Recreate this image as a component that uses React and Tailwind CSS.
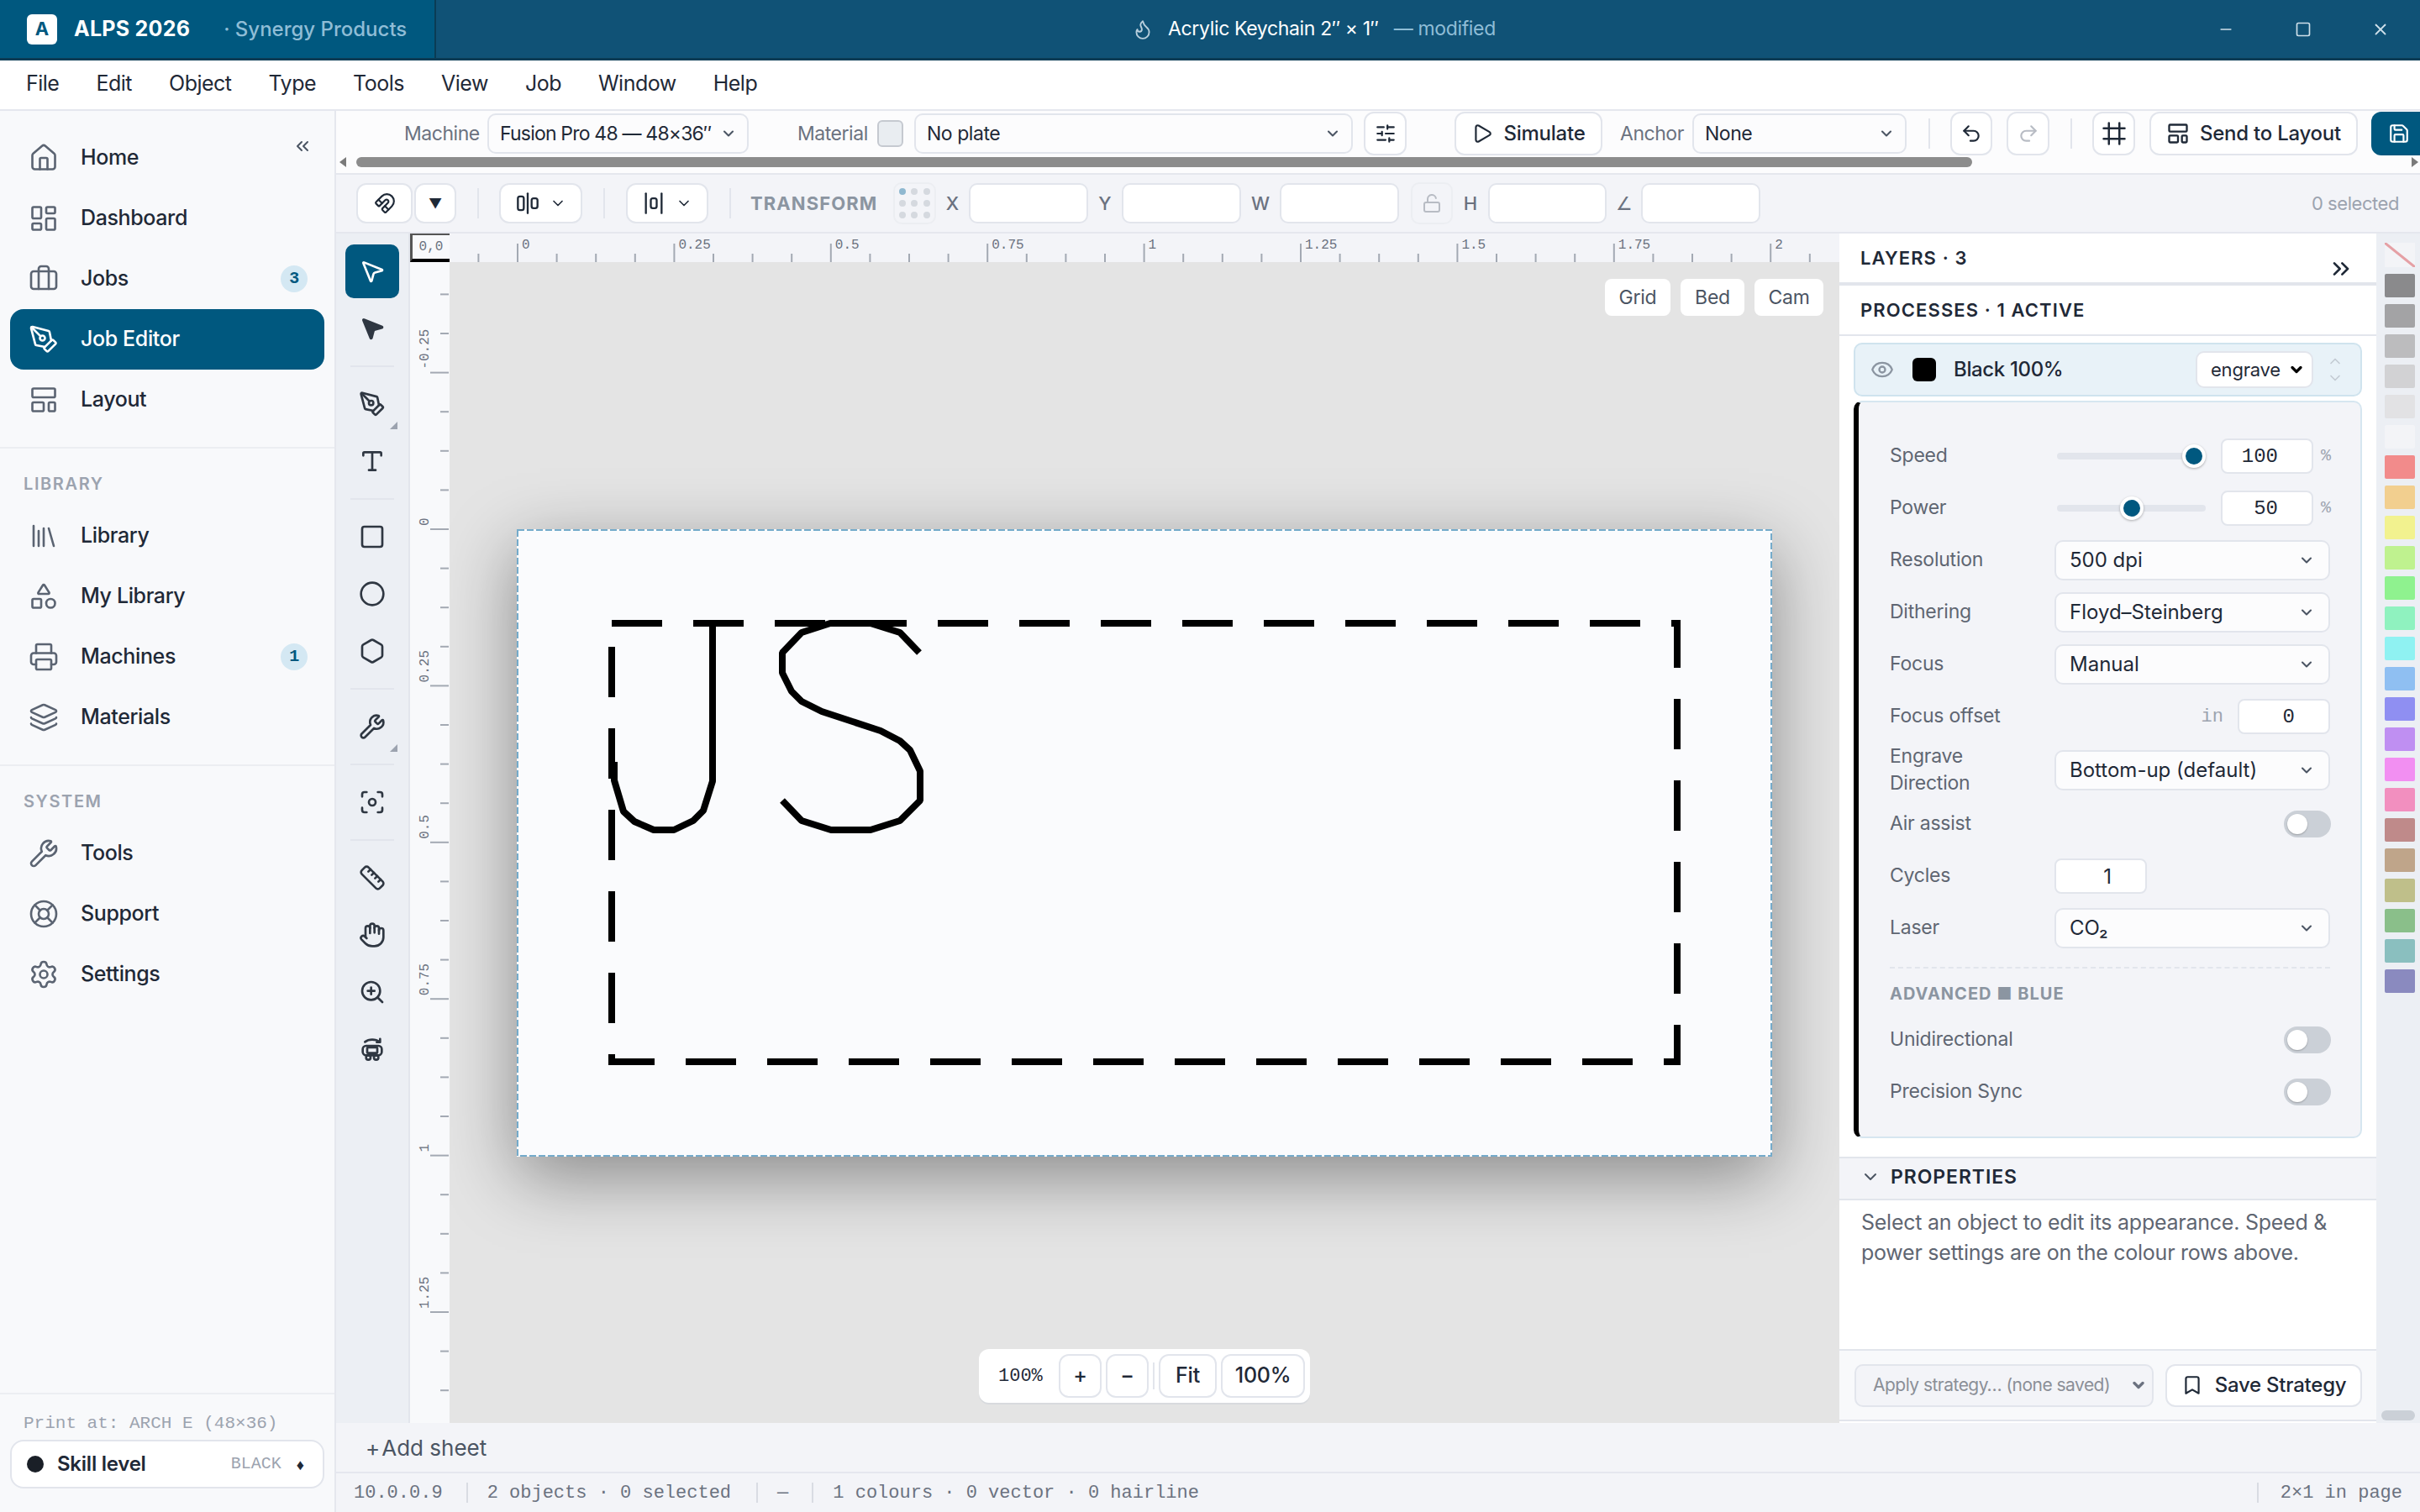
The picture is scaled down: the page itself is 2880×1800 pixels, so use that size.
import {
  AlignHorizontalJustifyCenter,
  AlignHorizontalSpaceAround,
  Bookmark,
  Briefcase,
  ChevronDown,
  ChevronUp,
  ChevronsLeft,
  ChevronsRight,
  Circle,
  Eye,
  Flame,
  Focus,
  Hand,
  Hexagon,
  House,
  Layers,
  LayoutDashboard,
  LayoutTemplate,
  Library,
  LifeBuoy,
  LockOpen,
  Magnet,
  Minus,
  MousePointer2,
  PenTool,
  Play,
  Printer,
  Redo2,
  Ruler,
  Save,
  Settings,
  Shapes,
  SlidersHorizontal,
  Square,
  Type,
  Undo2,
  Wrench,
  X,
  ZoomIn,
} from "lucide-react";

const MONO = "font-['Liberation_Mono',monospace]";

const palette = [
  "#8a8a8c", "#a3a3a5", "#bcbcbe", "#d2d2d4", "#e2e2e4", "#f3f4f7",
  "#f28b8b", "#f2cf8f", "#f2f28f", "#bff28f", "#8ff28f", "#8ff2bf",
  "#8ff2f2", "#8fbff2", "#8f8ff2", "#bf8ff2", "#f28ff2", "#f28fbf",
  "#bf8a8a", "#bfa58a", "#bfbf8a", "#8abf8a", "#8abfbf", "#8a8abf",
];

// Rotate-bus tool has no lucide icon of its own
function CustomTool({ size }) {
  return (
    <svg width={size} height={size} viewBox="0 0 24 24" fill="none" stroke="currentColor" strokeWidth="2" strokeLinecap="round" strokeLinejoin="round">
      <path d="M5.5 5.5C9 2.8 15 2.8 18.5 5.5" />
      <path d="M19 2.8v3h-3" />
      <rect x="3.5" y="9" width="17" height="8.5" rx="3" />
      <rect x="7.5" y="10.5" width="9" height="5" rx="0.5" />
      <circle cx="8.5" cy="19.5" r="2" />
      <circle cx="15.5" cy="19.5" r="2" />
    </svg>
  );
}

function ArtboardGrid() {
  return (
    <svg width="30" height="30" viewBox="0 0 24 24" fill="none" stroke="currentColor" strokeWidth="2" strokeLinecap="round">
      <path d="M7 2v20M17 2v20M2 7h20M2 17h20" />
    </svg>
  );
}

function NavItem({ icon: Icon, label, badge, active }) {
  return (
    <div className={`flex h-[72px] w-[374px] items-center rounded-2xl pl-[22px] text-[25px] font-medium tracking-[-0.015em] ${active ? "bg-[#00587f] text-white" : "text-[#1f2937]"}`}>
      <Icon size={36} strokeWidth={1.75} className={active ? "text-white" : "text-[#5b6472]"} />
      <span className="ml-[26px] pb-[1px]">{label}</span>
      {badge && (
        <span className={`ml-auto mr-5 flex h-8 w-8 items-center justify-center rounded-full bg-[#d4e8f3] text-[20px] font-semibold text-[#00587f] ${MONO}`}>
          {badge}
        </span>
      )}
    </div>
  );
}

function NavLabel({ children }) {
  return <div className="flex h-[68px] items-center pl-[28px] pt-[16px] text-[20px] font-semibold tracking-[0.08em] text-[#9ca3af]">{children}</div>;
}

function Sidebar() {
  return (
    <aside className="relative flex w-[400px] shrink-0 flex-col border-r-2 border-[#e5e7ee] bg-[#f8f9fb]">
      <button className="absolute left-[348px] top-[30px] text-[#4b5563]">
        <ChevronsLeft size={24} strokeWidth={2} />
      </button>
      <div className="border-b-2 border-[#eceef2] px-3 pb-5 pt-5">
        <NavItem icon={House} label="Home" />
        <NavItem icon={LayoutDashboard} label="Dashboard" />
        <NavItem icon={Briefcase} label="Jobs" badge="3" />
        <NavItem icon={PenTool} label="Job Editor" active />
        <NavItem icon={LayoutTemplate} label="Layout" />
      </div>
      <div className="border-b-2 border-[#eceef2] pb-5">
        <NavLabel>LIBRARY</NavLabel>
        <div className="px-3">
          <NavItem icon={Library} label="Library" />
          <NavItem icon={Shapes} label="My Library" />
          <NavItem icon={Printer} label="Machines" badge="1" />
          <NavItem icon={Layers} label="Materials" />
        </div>
      </div>
      <div>
        <NavLabel>SYSTEM</NavLabel>
        <div className="px-3">
          <NavItem icon={Wrench} label="Tools" />
          <NavItem icon={LifeBuoy} label="Support" />
          <NavItem icon={Settings} label="Settings" />
        </div>
      </div>
      <div className="mt-auto h-[142px] border-t-2 border-[#eceef2] px-3">
        <div className={`ml-4 mt-[22px] text-[21px] leading-[26px] text-[#9ca3af] ${MONO}`}>Print at: ARCH E (48×36)</div>
        <div className="mt-[6px] flex h-[58px] items-center rounded-2xl border-2 border-[#e2e5ec] bg-white pl-[18px] pr-[22px]">
          <span className="h-5 w-5 rounded-full bg-[#1a1f27]" />
          <span className="ml-4 text-[24px] font-semibold tracking-[-0.01em] text-[#1f2937]">Skill level</span>
          <span className={`ml-auto text-[20px] text-[#9ca3af] ${MONO}`}>BLACK</span>
          <span className="ml-[18px] text-[18px] text-[#1f2937]">♦</span>
        </div>
      </div>
    </aside>
  );
}

// size, padding and text come from the caller
function Select({ className, children, chevron = "text-[#4b5563]", weight = 2.5 }) {
  return (
    <div className={`flex shrink-0 items-center justify-between whitespace-nowrap rounded-[10px] border-2 border-[#e2e5ec] ${className}`}>
      <span>{children}</span>
      <ChevronDown size={20} strokeWidth={weight} className={chevron} />
    </div>
  );
}

const BAR_SELECT = "h-[48px] bg-[#fcfcfd] pl-[13px] pr-[12px] text-[23px] tracking-[-0.02em] text-[#1f2937]";

function Btn({ className, children }) {
  return <button className={`flex shrink-0 items-center justify-center whitespace-nowrap rounded-[12px] border-2 border-[#e2e5ec] bg-white ${className}`}>{children}</button>;
}

const BAR_BTN = "h-[52px] text-[#1f2937]";
const TF_BTN = "h-[48px] text-[#1f2937]";

function VSep({ className }) {
  return <div className={`h-9 w-[2px] shrink-0 bg-[#e2e5ec] ${className}`} />;
}

function BarLabel({ className, children }) {
  return <span className={`whitespace-nowrap text-[23px] tracking-[-0.02em] text-[#6b7280] ${className}`}>{children}</span>;
}

function MachineBar() {
  return (
    <div className="h-[76px] shrink-0 overflow-hidden border-b-2 border-[#e5e7ee] bg-[#fcfcfd]">
      <div className="flex h-[54px] items-center pl-[81px]">
        <BarLabel className="w-[86px]">Machine</BarLabel>
        <Select className={`ml-[13px] w-[311px] ${BAR_SELECT}`}><span className="tracking-[-0.035em]">Fusion Pro 48 — 48×36″</span></Select>
        <BarLabel className="ml-[58px] w-[83px]">Material</BarLabel>
        <span className="ml-[12px] h-[32px] w-[31px] shrink-0 rounded-[6px] border-2 border-[#c5c9d0] bg-[#e9edf1]" />
        <Select className={`ml-[13px] w-[522px] ${BAR_SELECT}`}>No plate</Select>
        <Btn className={`ml-[13px] w-[51px] ${BAR_BTN}`}><SlidersHorizontal size={26} strokeWidth={2} /></Btn>
        <Btn className={`ml-[57px] w-[176px] gap-3 text-[24px] font-medium tracking-[-0.01em] ${BAR_BTN}`}><Play size={26} strokeWidth={2} />Simulate</Btn>
        <BarLabel className="ml-[21px] w-[72px]">Anchor</BarLabel>
        <Select className={`ml-[14px] w-[255px] ${BAR_SELECT}`}>None</Select>
        <VSep className="ml-[26px]" />
        <Btn className={`ml-[24px] w-[50px] ${BAR_BTN}`}><Undo2 size={26} strokeWidth={2} /></Btn>
        <Btn className="ml-[17px] h-[52px] w-[51px] text-[#b8bcc4]"><Redo2 size={26} strokeWidth={2} /></Btn>
        <VSep className="ml-[25px]" />
        <Btn className={`ml-[24px] w-[51px] ${BAR_BTN}`}><ArtboardGrid /></Btn>
        <Btn className={`ml-[17px] w-[248px] gap-3 text-[24px] font-medium tracking-[-0.01em] ${BAR_BTN}`}><LayoutTemplate size={28} strokeWidth={2} />Send to Layout</Btn>
        <button className="ml-[16px] flex h-[52px] w-[80px] shrink-0 items-center rounded-[12px] bg-[#00587f] pl-[20px] text-white">
          <Save size={26} strokeWidth={2} />
        </button>
      </div>
      {/* overflow scrollbar */}
      <div className="flex h-[14px] items-center pl-[4px] pr-[2px]">
        <span className="h-0 w-0 border-y-[6px] border-r-[8px] border-y-transparent border-r-[#7a7a7a]" />
        <div className="ml-[12px] h-[12px] w-[1923px] rounded-full bg-[#8c8c8c]" />
        <span className="ml-auto h-0 w-0 border-y-[6px] border-l-[8px] border-y-transparent border-l-[#7a7a7a]" />
      </div>
    </div>
  );
}

function Field({ label, className }) {
  return <span className={`flex shrink-0 justify-center text-[22px] font-medium text-[#6b7280] ${className}`}>{label}</span>;
}

function Input({ className }) {
  return <input readOnly className={`h-[48px] shrink-0 rounded-[10px] border-2 border-[#e2e5ec] bg-white ${className}`} />;
}

function TransformBar() {
  return (
    <div className="flex h-[70px] shrink-0 items-center border-b-2 border-[#e5e7ee] bg-[#f3f4f8] pl-[24px]">
      <Btn className={`w-[67px] ${TF_BTN}`}><Magnet size={26} strokeWidth={2} /></Btn>
      <Btn className={`ml-[2px] w-[50px] text-[16px] ${TF_BTN}`}>▼</Btn>
      <VSep className="ml-[25px]" />
      <Btn className={`ml-[24px] w-[99px] gap-3 ${TF_BTN}`}>
        <AlignHorizontalJustifyCenter size={28} strokeWidth={2} />
        <ChevronDown size={20} strokeWidth={2} />
      </Btn>
      <VSep className="ml-[25px]" />
      <Btn className={`ml-[25px] w-[98px] gap-3 ${TF_BTN}`}>
        <AlignHorizontalSpaceAround size={28} strokeWidth={2} />
        <ChevronDown size={20} strokeWidth={2} />
      </Btn>
      <VSep className="ml-[25px]" />
      <span className="ml-[23px] w-[148px] whitespace-nowrap text-[22px] font-bold tracking-[0.05em] text-[#8b95a1]">TRANSFORM</span>
      <div className="ml-[22px] grid h-[50px] w-[51px] shrink-0 grid-cols-3 place-items-center rounded-[10px] border-2 border-[#eceef2] p-[2px]">
        {[0, 1, 2, 3, 4, 5, 6, 7, 8].map((i) => (
          <span key={i} className={`h-[8px] w-[8px] rounded-full ${i === 0 ? "bg-[#8fb8d0]" : "bg-[#d5d9df]"}`} />
        ))}
      </div>
      <Field label="X" className="w-[39px]" />
      <Input className="w-[142px]" />
      <Field label="Y" className="w-[40px]" />
      <Input className="w-[142px]" />
      <Field label="W" className="w-[46px]" />
      <Input className="w-[142px]" />
      <button className="ml-[14px] flex h-[50px] w-[50px] shrink-0 items-center justify-center rounded-[10px] border-2 border-[#eceef2] text-[#b8bcc4]">
        <LockOpen size={24} strokeWidth={2} />
      </button>
      <Field label="H" className="w-[42px]" />
      <Input className="w-[141px]" />
      <Field label="∠" className="w-[41px]" />
      <Input className="w-[142px]" />
      <span className="ml-auto mr-[25px] text-[22px] tracking-[-0.02em] text-[#9ca3af]">0 selected</span>
    </div>
  );
}

function RailSep() {
  return <div className="mx-[6px] my-[8px] h-[2px] w-[52px] bg-[#e2e5ec]" />;
}

function Tool({ icon: Icon, active, fill, flyout }) {
  return (
    <div className={`relative flex h-16 w-16 items-center justify-center rounded-[10px] ${active ? "bg-[#00587f] text-white" : "text-[#2f3742]"}`}>
      <Icon size={32} strokeWidth={2} fill={fill ? "currentColor" : "none"} />
      {flyout && <span className="absolute bottom-[2px] right-[2px] h-0 w-0 border-b-[9px] border-l-[9px] border-b-[#9ca3af] border-l-transparent" />}
    </div>
  );
}

function ToolRail() {
  return (
    <div className="flex w-[88px] shrink-0 flex-col items-center gap-1 border-r-2 border-[#e2e5ec] bg-[#eceff4] pt-[13px]">
      <Tool icon={MousePointer2} active />
      <Tool icon={MousePointer2} fill />
      <RailSep />
      <Tool icon={PenTool} flyout />
      <Tool icon={Type} />
      <RailSep />
      <Tool icon={Square} />
      <Tool icon={Circle} />
      <Tool icon={Hexagon} />
      <RailSep />
      <Tool icon={Wrench} flyout />
      <RailSep />
      <Tool icon={Focus} />
      <RailSep />
      <Tool icon={Ruler} />
      <Tool icon={Hand} />
      <Tool icon={ZoomIn} />
      <Tool icon={CustomTool} />
    </div>
  );
}

function fmt(i) {
  return String(i * 0.25);
}

function HRuler() {
  const ticks = [];
  for (let i = -1; i < 34; i++) ticks.push(i);
  return (
    <svg width="1654" height="34" viewBox="535 278 1654 34" className="block shrink-0">
      {ticks.map((i) => {
        const x = 616 + 46.6 * i;
        const major = i % 4 === 0;
        return (
          <g key={i}>
            <line x1={x} x2={x} y1={major ? 290 : 302} y2="312" stroke="#a3a9b3" strokeWidth="2" />
            {major && <text x={x + 5} y="296" fontSize="16" fill="#6b7280" fontFamily="Liberation Mono, monospace">{fmt(i / 4)}</text>}
          </g>
        );
      })}
    </svg>
  );
}

function VRuler() {
  const ticks = [];
  for (let i = -6; i < 23; i++) ticks.push(i);
  return (
    <svg width="46" height="1380" viewBox="488 312 46 1380" className="block">
      {ticks.map((i) => {
        const y = 630 + 46.6 * i;
        const major = i % 4 === 0;
        return (
          <g key={i}>
            <line x1={major ? 512 : 524} x2="534" y1={y} y2={y} stroke="#a3a9b3" strokeWidth="2" />
            {major && (
              <text transform={`translate(510 ${y - 4}) rotate(-90)`} fontSize="16" fill="#6b7280" fontFamily="Liberation Mono, monospace">
                {fmt(i / 4)}
              </text>
            )}
          </g>
        );
      })}
    </svg>
  );
}

function Artwork() {
  return (
    <svg viewBox="615 630 1494 747" className="block h-full w-full" fill="none" stroke="#000" strokeWidth="8">
      <rect x="616" y="631" width="1492" height="745" stroke="#74abcb" strokeWidth="2" strokeDasharray="8 3" />
      <path d="M728 742H1996V1264H728Z" strokeDasharray="60 37" strokeMiterlimit="10" />
      <path d="M731 907V929L742 966L755 978L778 988H802L825 977L837 965L848 930V745" strokeLinejoin="bevel" />
      <path d="M1094 777L1071 753L1036 742H988L954 753L931 777V801L942 823L954 835L978 847L1048 870L1071 882L1083 893L1095 918V953L1071 977L1036 988H989L954 977L931 953" strokeLinejoin="bevel" />
    </svg>
  );
}

function ZoomControls() {
  const cls = "flex h-[52px] items-center justify-center rounded-[12px] border-2 border-[#e2e5ec] text-[25px] font-medium tracking-[-0.01em] text-[#1f2937]";
  return (
    <div className="absolute left-[630px] top-[1294px] flex h-[64px] w-[394px] items-center rounded-[12px] bg-white pl-[23px] shadow-[0_2px_0_#d8dade]">
      <span className={`w-[72px] text-[22px] text-[#1f2937] ${MONO}`}>100%</span>
      <div className={`${cls} w-[51px]`}>+</div>
      <div className={`${cls} ml-[5px] w-[51px]`}>−</div>
      <div className="ml-[5px] h-[32px] w-[2px] bg-[#e2e5ec]" />
      <div className={`${cls} ml-[5px] w-[69px]`}>Fit</div>
      <div className={`${cls} ml-[5px] w-[100px]`}>100%</div>
    </div>
  );
}

function Canvas() {
  const chip = "flex h-[44px] items-center justify-center rounded-[8px] bg-white text-[23px] tracking-[-0.01em] text-[#4b5563]";
  return (
    <div className="relative flex-1 overflow-hidden bg-[#e4e4e4]">
      <div className="absolute left-[80px] top-[318px] h-[747px] w-[1494px] bg-[#fafbfd] shadow-[0_24px_80px_rgba(0,0,0,0.4)]">
        <Artwork />
      </div>
      <div className="absolute right-[19px] top-[20px] flex gap-3">
        <div className={`${chip} w-[78px]`}>Grid</div>
        <div className={`${chip} w-[76px]`}>Bed</div>
        <div className={`${chip} w-[82px]`}>Cam</div>
      </div>
      <ZoomControls />
    </div>
  );
}

function Row({ label, height = "h-[62px]", children }) {
  return (
    <div className={`flex items-center ${height}`}>
      <div className="w-[196px] shrink-0 text-[23px] leading-[32px] tracking-[-0.01em] text-[#5f6672]">{label}</div>
      <div className="flex flex-1 items-center pt-[2px]">{children}</div>
    </div>
  );
}

function NumBox({ value, className, font = MONO }) {
  return (
    <input
      readOnly
      value={value}
      className={`h-[42px] w-[110px] rounded-[8px] border-2 border-[#e2e5ec] bg-white pr-[40px] text-right text-[24px] text-[#1f2937] ${font} ${className}`}
    />
  );
}

function Slider({ value }) {
  return (
    <>
      <div className="relative ml-[3px] h-2 w-[177px] rounded-full bg-[#e2e5ec]">
        <span
          className="absolute top-[-10px] h-[28px] w-[28px] rounded-full border-[4px] border-white bg-[#00587f] shadow-[0_1px_3px_rgba(0,0,0,0.3)]"
          style={{ left: `${(value / 100) * 149}px` }}
        />
      </div>
      <NumBox value={value} className="ml-[18px]" />
      <span className={`ml-[9px] text-[20px] text-[#9ca3af] ${MONO}`}>%</span>
    </>
  );
}

function PanelSelect({ children }) {
  return <Select className="h-[48px] w-[328px] bg-[#fcfcfd] pl-[16px] pr-[16px] text-[24px] text-[#1f2937]">{children}</Select>;
}

function Toggle() {
  return (
    <span className="ml-auto mr-[-1px] flex h-8 w-14 items-center rounded-full bg-[#cbd0d7] pl-1">
      <span className="h-6 w-6 rounded-full bg-white shadow-[0_1px_2px_rgba(0,0,0,0.25)]" />
    </span>
  );
}

function ProcessCard() {
  return (
    <div className="ml-[17px] mt-[5px] w-[605px] rounded-[10px] border-2 border-l-[6px] border-[#d6e6f0] border-l-black bg-[#f3f4f8] pb-[23px] pl-[37px] pr-[36px] pt-[32px]">
      <Row label="Speed"><Slider value={100} /></Row>
      <Row label="Power"><Slider value={50} /></Row>
      <Row label="Resolution"><PanelSelect>500 dpi</PanelSelect></Row>
      <Row label="Dithering"><PanelSelect>Floyd–Steinberg</PanelSelect></Row>
      <Row label="Focus"><PanelSelect>Manual</PanelSelect></Row>
      <Row label="Focus offset">
        <span className={`ml-auto text-[22px] text-[#9ca3af] ${MONO}`}>in</span>
        <NumBox value="0" className="ml-[17px]" />
      </Row>
      <Row label={<>Engrave<br />Direction</>} height="h-[66px]"><PanelSelect>Bottom-up (default)</PanelSelect></Row>
      <Row label="Air assist"><Toggle /></Row>
      <Row label="Cycles"><NumBox value="1" font="font-['Inter',sans-serif]" /></Row>
      <Row label="Laser"><PanelSelect>CO₂</PanelSelect></Row>
      <div className="mt-[16px] border-t-2 border-dashed border-[#e2e5ec]" />
      <div className="flex h-[53px] items-center pt-[6px] text-[20px] font-bold tracking-[0.05em] text-[#8b95a1]">ADVANCED ■ BLUE</div>
      <Row label="Unidirectional"><Toggle /></Row>
      <Row label="Precision Sync"><Toggle /></Row>
    </div>
  );
}

function RightPanel() {
  return (
    <div className="flex w-[639px] shrink-0 flex-col bg-white">
      <div className="relative flex h-[62px] shrink-0 items-center border-b-4 border-[#e2e5ec] pl-[25px] text-[22px] font-semibold tracking-[0.05em] text-[#1f2937]">
        LAYERS · 3
        <ChevronsRight size={32} strokeWidth={2} className="absolute right-[26px] top-[26px]" />
      </div>
      <div className="flex h-[60px] shrink-0 items-center border-b-2 border-[#e2e5ec] pl-[25px] text-[22px] font-semibold tracking-[0.05em] text-[#1f2937]">
        PROCESSES · 1 ACTIVE
      </div>
      <div className="h-[977px] shrink-0 pt-[8px]">
        <div className="ml-[17px] flex h-[64px] w-[605px] items-center rounded-[10px] border-2 border-[#cfe3ee] bg-[#e8f2f8] pl-[18px]">
          <Eye size={28} strokeWidth={2} className="text-[#8b95a1]" />
          <span className="ml-[22px] h-7 w-7 rounded-[6px] bg-black" />
          <span className="ml-[21px] text-[24px] font-medium tracking-[-0.015em] text-[#1f2937]">Black 100%</span>
          <Select className="ml-auto h-[44px] w-[140px] bg-white pl-[16px] pr-[8px] text-[22px] tracking-[-0.01em] text-[#1f2937]" chevron="text-black" weight={4}>engrave</Select>
          <div className="ml-[16px] mr-[20px] flex flex-col items-center text-[#c3cbd3]">
            <ChevronUp size={20} strokeWidth={2} />
            <ChevronDown size={20} strokeWidth={2} />
          </div>
        </div>
        <ProcessCard />
      </div>
      <div className="flex h-[52px] shrink-0 items-center gap-3 border-y-2 border-[#e2e5ec] bg-[#f3f4f8] pb-[4px] pl-[25px] text-[23px] font-semibold tracking-[0.04em] text-[#1f2937]">
        <ChevronDown size={24} strokeWidth={2} className="text-[#4b5563]" />
        PROPERTIES
      </div>
      <div className="h-[177px] shrink-0 px-[26px] pt-[8px] text-[25px] leading-[36px] tracking-[-0.01em] text-[#5f6672]">
        Select an object to edit its appearance. Speed &amp; power settings are on the colour rows above.
      </div>
      <div className="flex h-[86px] shrink-0 items-center gap-[14px] border-y-2 border-[#e2e5ec] bg-[#f8f9fb] pl-[18px]">
        <Select className="h-[51px] w-[356px] bg-[#f3f4f8] pl-[20px] pr-[6px] text-[21px] tracking-[-0.025em] text-[#8b8f97]" chevron="text-[#6b7280]" weight={4}>
          Apply strategy… (none saved)
        </Select>
        <button className="flex h-[51px] w-[234px] items-center justify-center gap-[14px] rounded-[12px] border-2 border-[#e2e5ec] bg-white text-[24px] font-medium tracking-[-0.01em] text-[#1f2937]">
          <Bookmark size={26} strokeWidth={2} />
          Save Strategy
        </button>
      </div>
    </div>
  );
}

function Palette() {
  return (
    <div className="relative flex flex-1 flex-col items-end gap-2 bg-[#eceff4] pr-[6px] pt-[11px]">
      <div className="relative h-[29px] w-[36px] overflow-hidden bg-[#f3f4f7]">
        <svg viewBox="0 0 36 29" className="block h-full w-full">
          <line x1="0" y1="0" x2="36" y2="29" stroke="#e5a0a5" strokeWidth="3" />
        </svg>
      </div>
      {palette.map((c) => (
        <span key={c} className="h-[28px] w-[36px] rounded-[2px]" style={{ backgroundColor: c }} />
      ))}
      <span className="absolute bottom-[3px] right-[6px] h-[12px] w-[40px] rounded-full bg-[#cbd0d7]" />
    </div>
  );
}

function Workspace() {
  return (
    <div className="flex h-[1416px] shrink-0">
      <ToolRail />
      <div className="flex w-[1701px] shrink-0 flex-col">
        <div className="flex h-[34px] shrink-0 bg-[#f3f4f8]">
          <div className={`flex h-[34px] w-[47px] shrink-0 items-center justify-center border-b-[4px] border-l-[3px] border-t-[2px] border-b-black border-l-[#555] border-t-[#555] bg-[#f8f9fb] text-[16px] text-[#6b7280] ${MONO}`}>
            0,0
          </div>
          <HRuler />
        </div>
        <div className="flex flex-1 overflow-hidden">
          <div className="w-[47px] shrink-0 overflow-hidden bg-[#f8f9fb]"><VRuler /></div>
          <Canvas />
        </div>
      </div>
      <RightPanel />
      <Palette />
    </div>
  );
}

function StatusSep() {
  return <div className="h-[24px] w-[2px] bg-[#d9dce3]" />;
}

export default function App() {
  return (
    <div className="flex h-[1800px] w-[2880px] flex-col overflow-hidden bg-[#f3f4f8] font-['Inter',sans-serif]">
      {/* title bar */}
      <header className="relative flex h-[72px] shrink-0 items-center border-b-[3px] border-[#0b3c55] bg-[#105276] text-white">
        <div className="flex h-full w-[519px] items-center border-r-2 border-[#0b3c55] bg-[#00587f] pl-[32px]">
          <div className="flex h-9 w-9 items-center justify-center rounded-[6px] bg-white text-[22px] font-bold text-[#00587f]">A</div>
          <span className="ml-5 text-[25px] font-bold tracking-[0.01em]">ALPS 2026</span>
          <span className="ml-[40px] text-[24px] font-medium text-[#8fbdd6]">· Synergy Products</span>
        </div>
        <div className="absolute left-[1347px] flex items-center text-[23px] tracking-[-0.015em]">
          <Flame size={26} strokeWidth={1.75} className="text-[#b8cfdd]" />
          <span className="ml-[17px]">Acrylic Keychain 2″ × 1″</span>
          <span className="ml-[18px] text-[#8fbdd6]">— modified</span>
        </div>
        <div className="ml-auto flex items-center text-[#cfe0ea]">
          <div className="flex w-[92px] justify-center"><Minus size={20} strokeWidth={2} /></div>
          <div className="flex w-[92px] justify-center"><Square size={20} strokeWidth={2} /></div>
          <div className="mr-[1px] flex w-[92px] justify-center"><X size={22} strokeWidth={2} /></div>
        </div>
      </header>

      {/* menu bar */}
      <nav className="flex h-[60px] shrink-0 items-center border-b-2 border-[#e5e7ee] bg-white pb-[2px] pl-[9px] text-[25px] tracking-[-0.02em] text-[#1f2937]">
        {["File", "Edit", "Object", "Type", "Tools", "View", "Job", "Window", "Help"].map((m) => (
          <span key={m} className="px-[22px]">{m}</span>
        ))}
      </nav>

      <div className="flex flex-1 overflow-hidden">
        <Sidebar />
        <div className="flex w-[2480px] flex-col">
          <MachineBar />
          <TransformBar />
          <Workspace />
          <div className="flex h-[60px] shrink-0 items-center border-b-2 border-[#e5e7ee] pl-[35px] text-[26px] text-[#4b5563]">
            <span className="mr-[2px]">+</span>Add sheet
          </div>
          <footer className={`flex h-[46px] shrink-0 items-center pl-[21px] text-[22px] text-[#6b7280] ${MONO}`}>
            <span>10.0.0.9</span>
            <div className="ml-[28px] mr-[23px]"><StatusSep /></div>
            <span>2 objects · 0 selected</span>
            <div className="ml-[30px] mr-[23px]"><StatusSep /></div>
            <span>—</span>
            <div className="ml-[28px] mr-[23px]"><StatusSep /></div>
            <span>1 colours · 0 vector · 0 hairline</span>
            <div className="ml-auto mr-[26px]"><StatusSep /></div>
            <span className="mr-[21px]">2×1 in page</span>
          </footer>
        </div>
      </div>
    </div>
  );
}
